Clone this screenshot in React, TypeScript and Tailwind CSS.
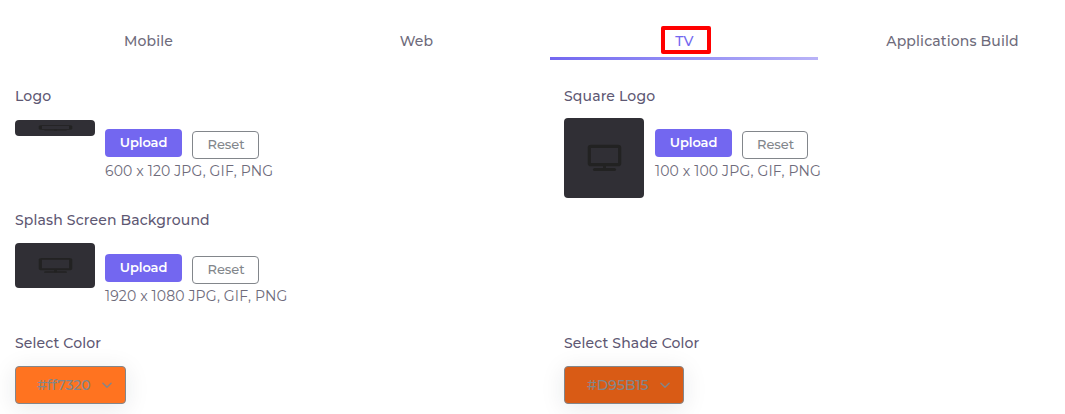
type PreviewShape = "banner" | "square" | "wide";

const tabs = [
  { label: "Mobile" },
  { label: "Web" },
  { label: "TV", active: true },
  { label: "Applications Build" },
];

const previewSize: Record<PreviewShape, string> = {
  banner: "mt-[2px] h-4",
  square: "h-20",
  wide: "mt-px h-[45px]",
};

function Tab({ label, active }: { label: string; active?: boolean }) {
  return (
    <button
      className={`relative h-[60px] w-[268px] shrink-0 pt-[22px] text-center text-sm font-medium tracking-[0.14px] ${
        active ? "text-[#7367f0]" : "text-[#6e6b7b]"
      }`}
    >
      <span className="block h-[38px] pl-px leading-[38px]">{label}</span>
      {active && (
        <>
          <span className="absolute bottom-0 left-0 h-[3px] w-full bg-linear-to-r from-[#7367f0] to-[#b9b3f7]" />
          <span className="absolute left-[111px] top-[26px] h-7 w-[50px] rounded-[2px] border-4 border-[#ff0000]" />
        </>
      )}
    </button>
  );
}

function Preview({ shape }: { shape: PreviewShape }) {
  return (
    <div className={`w-20 shrink-0 overflow-hidden rounded bg-[#302f35] ${previewSize[shape]}`}>
      {/* The TV glyph stretches with the preview */}
      <svg className="h-full w-full" viewBox="0 0 80 80" preserveAspectRatio="none" fill="none" stroke="#222222">
        <rect x="25.3" y="28.3" width="30.4" height="18.4" rx="1.5" strokeWidth="3.2" />
        <path d="M40.5 47v5" strokeWidth="3" />
        <path d="M30.5 51.5h20" strokeWidth="3" strokeLinecap="round" />
      </svg>
    </div>
  );
}

function UploadField({ label, hint, shape }: { label: string; hint: string; shape: PreviewShape }) {
  return (
    <div>
      <p className="h-8 text-sm font-medium leading-[21px] text-[#5e5873]">{label}</p>
      <div className="flex items-start">
        <Preview shape={shape} />
        <div className={`ml-2.5 ${shape === "wide" ? "pt-3" : "pt-[11px]"} ${shape === "square" ? "pl-px" : ""}`}>
          <div className="flex gap-2.5">
            <button className="h-7 w-[77px] rounded bg-[#7367f0] pb-px text-[13px] font-semibold leading-[27px] tracking-[-0.1px] text-white">
              Upload
            </button>
            <button
              className={`mt-0.5 h-7 rounded border border-[#82868b] pb-px pl-px text-[13px] font-medium leading-[25px] tracking-[-0.05px] text-[#82868b] ${
                shape === "square" ? "w-[66px]" : "w-[67px]"
              }`}
            >
              Reset
            </button>
          </div>
          <p className="mt-0.5 whitespace-nowrap text-sm leading-[21px] text-[#6e6b7b]">{hint}</p>
        </div>
      </div>
    </div>
  );
}

function ColorField({ label, value, color }: { label: string; value: string; color: string }) {
  return (
    <div>
      <p className="text-sm font-medium leading-[21px] text-[#5e5873]">{label}</p>
      <button
        className={`mt-3 flex h-[38px] items-center justify-between rounded border border-[#82868b] pr-[11px] text-sm font-medium tracking-[-0.05px] text-[#82868b] shadow-[0_4px_24px_0_rgba(34,41,47,0.1)] ${color}`}
      >
        {value}
        <svg className="size-3.5" viewBox="0 0 24 24" fill="none" stroke="currentColor" strokeWidth="2.4" strokeLinecap="round" strokeLinejoin="round">
          <path d="m5 9 7 7 7-7" />
        </svg>
      </button>
    </div>
  );
}

export default function App() {
  return (
    <main className="h-[414px] w-full overflow-hidden bg-white font-['Montserrat','Inter',sans-serif] tracking-[0.14px]">
      <nav className="flex pl-[14px]">
        {tabs.map((tab) => (
          <Tab key={tab.label} {...tab} />
        ))}
      </nav>

      <div className="grid grid-cols-[549px_1fr] grid-rows-[124px_123px_auto] pl-[15px] pt-[26px]">
        <UploadField label="Logo" hint="600 x 120 JPG, GIF, PNG" shape="banner" />
        <UploadField label="Square Logo" hint="100 x 100 JPG, GIF, PNG" shape="square" />
        <div className="col-span-2">
          <UploadField label="Splash Screen Background" hint="1920 x 1080 JPG, GIF, PNG" shape="wide" />
        </div>
        <ColorField label="Select Color" value="#ff7320" color="w-[111px] bg-[#ff7320] pl-[21px]" />
        <ColorField label="Select Shade Color" value="#D95B15" color="w-[120px] bg-[#d95b15] pl-[22px]" />
      </div>
    </main>
  );
}
